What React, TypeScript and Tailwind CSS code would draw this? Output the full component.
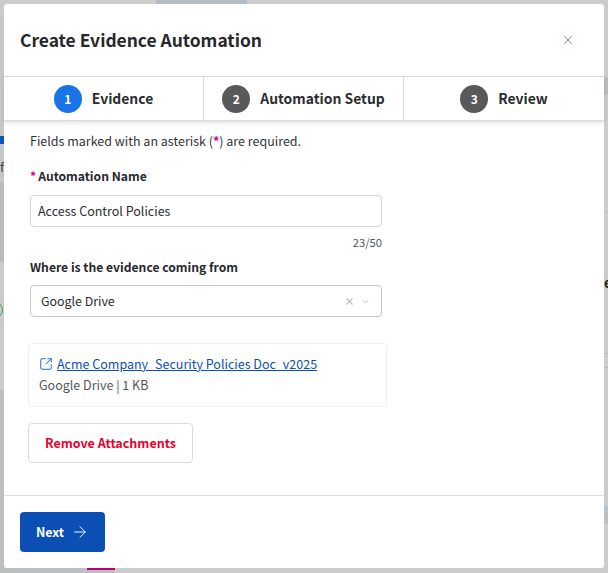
import { ArrowRight, ChevronDown, SquareArrowOutUpRight, X } from "lucide-react";

const FONT = "font-['Noto_Sans_CJK_JP','Noto_Sans',sans-serif]";

const steps = [
  { n: 1, label: "Evidence", active: true },
  { n: 2, label: "Automation Setup", active: false },
  { n: 3, label: "Review", active: false },
];

function Backdrop() {
  return (
    <div aria-hidden>
      <div className="absolute left-[156px] top-0 h-1 w-[91px] bg-[#b5bcc6]" />
      <div className="absolute left-0 top-[16px] h-[166px] w-1 bg-[#c6c8c8]" />
      <div className="absolute left-0 top-[182px] h-[80px] w-1 bg-[#b9bcbc]" />
      <div className="absolute left-0 top-[136px] h-[8px] w-1 bg-[#0b55b8]" />
      <div className="absolute left-0 top-[390px] h-[183px] w-1 bg-[#bcbfbf]" />
      <div className="absolute left-0 top-[568px] h-[5px] w-[115px] bg-[#bcbfbf]" />
      <div className="absolute left-[87px] top-[568px] h-[2px] w-[28px] bg-[#b8007f]" />
      <div className="absolute right-0 top-[77px] h-[18px] w-1 bg-[#b9bfc0]" />
      <div className="absolute right-0 top-[506px] h-[18px] w-1 bg-[#bcc2c4]" />
      <div className="absolute right-0 top-[506px] h-[2px] w-1 bg-[#b0c0d4]" />
      <div className="absolute right-0 top-[212px] h-px w-1 bg-[#b8b8b8]" />
      <div className="absolute right-0 top-[353px] h-px w-1 bg-[#b8b8b8]" />
      <div className="absolute right-0 top-[367px] h-px w-1 bg-[#b8b8b8]" />
      <div className="absolute left-[604px] top-[276px] text-[13px] font-semibold leading-[14px] text-[#222]">e</div>
      <div className="absolute left-0 top-[160px] text-[13px] leading-[14px] text-[#444]">f</div>
      <div className="absolute left-[-13px] top-[302px] h-[16px] w-[16px] rounded-full border-[1.5px] border-[#2fa84f]" />
    </div>
  );
}

function Stepper() {
  return (
    <div className="relative z-10 flex h-[45px] border-y border-[#d9dbde] bg-white shadow-[0_2px_4px_rgba(0,0,0,0.12)]">
      {steps.map((s, i) => (
        <div
          key={s.n}
          className={`flex w-[200px] items-center justify-center gap-[10px] ${i < 2 ? "border-r border-[#d9dbde]" : ""}`}
        >
          <span
            className={`flex h-7 w-7 items-center justify-center rounded-full text-[12px] font-bold text-white ${s.active ? "bg-[#1a73e8]" : "bg-[#58595b]"}`}
          >
            {s.n}
          </span>
          <span className="text-[13.9px] font-semibold text-[#2b2d30]">{s.label}</span>
        </div>
      ))}
    </div>
  );
}

export default function App() {
  return (
    <div className={`relative h-[573px] w-[608px] overflow-hidden bg-[#cccccc] p-1 pb-[5px] ${FONT}`}>
      <Backdrop />
      <div className="relative flex h-full flex-col rounded-[3px] bg-white">
        <header className="flex h-[72px] items-center justify-between pl-4 pr-[29px]">
          <h1 className="text-[17.4px] font-semibold text-[#26282b]">Create Evidence Automation</h1>
          <X size={14} strokeWidth={1.5} className="text-[#6f8490]" />
        </header>

        <Stepper />

        <div className="flex-1 px-6 pt-[10px]">
          <p className="ml-[2px] text-[12.5px] leading-5 text-[#33353a]">
            Fields marked with an asterisk (<span className="font-bold text-[#d6008f]">*</span>) are required.
          </p>

          <label className="mb-[9px] ml-[2px] mt-[15px] flex gap-[2px] text-[12.15px] font-semibold leading-5 text-[#26282b]">
            <span className="font-bold text-[#d6008f]">*</span>
            <span>Automation Name</span>
          </label>
          <div className="ml-[2px] flex h-8 w-[352px] items-center rounded-[4px] border border-[#d4d6d9] px-[7px] text-[12.5px] text-[#2b2d30]">
            Access Control Policies
          </div>
          <div className="ml-[2px] mt-[6px] w-[352px] text-right text-[11.2px] leading-[18px] text-[#55575a]">23/50</div>

          <label className="ml-[2px] mt-[6px] block text-[12.15px] font-semibold leading-5 text-[#26282b]">
            Where is the evidence coming from
          </label>
          <div className="ml-[2px] mt-2 flex h-8 w-[352px] items-center justify-between rounded-[4px] border border-[#c4c6c9] pl-[10px] pr-[10px] text-[12.4px] text-[#2b2d30]">
            <span>Google Drive</span>
            <span className="flex items-center gap-[5px] text-[#bbbdc0]">
              <X size={11} strokeWidth={2.5} />
              <ChevronDown size={11} strokeWidth={2} />
            </span>
          </div>

          <div className="mt-[26px] h-16 w-[359px] rounded-[4px] border border-[#eeeef4] px-[10px] pt-[10px]">
            <div className="flex items-center gap-[4px] text-[12.5px] leading-5">
              <SquareArrowOutUpRight size={14} strokeWidth={1.6} className="text-[#1a62c8]" />
              <a className="text-[#0b4fb5] underline">Acme Company_Security Policies Doc_v2025</a>
            </div>
            <div className="mt-[1px] text-[12.5px] leading-5 text-[#55575a]">Google Drive | 1 KB</div>
          </div>

          <button className="mt-4 flex h-10 w-[165px] items-center justify-center rounded-[4px] border border-[#d9dbde] bg-white text-[12.5px] font-bold text-[#e8002d]">
            Remove Attachments
          </button>
        </div>

        <footer className="flex h-[73px] items-start border-t border-[#dcdde0] px-4 pt-4">
          <button className="flex h-10 w-[85px] items-center justify-center gap-[7px] rounded-[4px] bg-[#0b4fb5] text-[12.4px] font-semibold text-white">
            Next
            <ArrowRight size={18} strokeWidth={1.25} />
          </button>
        </footer>
      </div>
    </div>
  );
}
